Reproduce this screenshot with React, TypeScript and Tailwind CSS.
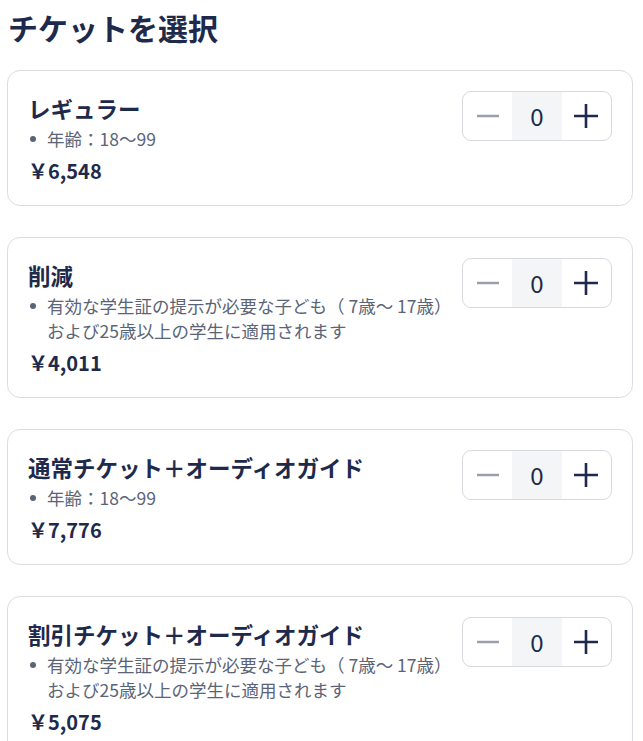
import React from 'react';

interface Ticket {
  name: string;
  lines: string[];
  price: string;
}

const tickets: Ticket[] = [
  { name: 'レギュラー', lines: ['年齢：18〜99'], price: '￥6,548' },
  {
    name: '削減',
    lines: ['有効な学生証の提示が必要な子ども（ 7歳〜 17歳）', 'および25歳以上の学生に適用されます'],
    price: '￥4,011',
  },
  { name: '通常チケット＋オーディオガイド', lines: ['年齢：18〜99'], price: '￥7,776' },
  {
    name: '割引チケット＋オーディオガイド',
    lines: ['有効な学生証の提示が必要な子ども（ 7歳〜 17歳）', 'および25歳以上の学生に適用されます'],
    price: '￥5,075',
  },
];

const Stepper: React.FC = () => (
  <div className="flex h-[50px] w-[150px] shrink-0 overflow-hidden rounded-[9px] border border-[#d6d9de]">
    <button className="flex w-[50px] items-center justify-center" aria-label="減らす">
      <svg width="22" height="22" viewBox="0 0 22 22">
        <line x1="0.5" y1="11" x2="21.5" y2="11" stroke="#9aa1ad" strokeWidth="2.6" strokeLinecap="round" />
      </svg>
    </button>
    <div className="flex w-[50px] items-center justify-center bg-[#f4f5f7] text-[24px] text-[#1e2a4b]">0</div>
    <button className="flex w-[50px] items-center justify-center" aria-label="増やす">
      <svg width="24" height="24" viewBox="0 0 24 24">
        <line x1="0.5" y1="12" x2="23.5" y2="12" stroke="#1e2a4b" strokeWidth="2.6" strokeLinecap="round" />
        <line x1="12" y1="0.5" x2="12" y2="23.5" stroke="#1e2a4b" strokeWidth="2.6" strokeLinecap="round" />
      </svg>
    </button>
  </div>
);

const TicketCard: React.FC<{ ticket: Ticket }> = ({ ticket }) => (
  <div className="flex items-start justify-between rounded-[13px] border border-[#dadde2] bg-white p-5">
    <div className="flex flex-col">
      <h2 className="text-[22.5px] font-bold leading-[35px] text-[#1e2a4b]">{ticket.name}</h2>
      <div className="flex pl-[2px]">
        <span className="mt-[10px] h-[6px] w-[6px] shrink-0 rounded-full bg-[#5b6477]" />
        <div className="ml-[11px] text-[17.5px] leading-[25px] text-[#5b6477]">
          {ticket.lines.map((l) => (
            <div key={l}>{l}</div>
          ))}
        </div>
      </div>
      <div className="mt-[6px] text-[20px] font-bold leading-[28px] text-[#1e2a4b]">{ticket.price}</div>
    </div>
    <Stepper />
  </div>
);

const App: React.FC = () => {
  return (
    <div
      className="min-h-[741px] w-[643px] bg-white"
      style={{ fontFamily: '"Noto Sans CJK JP", "Noto Sans", sans-serif' }}
    >
      <h1 className="pl-[8px] text-[30px] font-bold leading-[54px] text-[#1e2a4b]">チケットを選択</h1>
      <div className="ml-[7px] mt-[16px] flex w-[626px] flex-col gap-[31px]">
        {tickets.map((t) => (
          <TicketCard key={t.name} ticket={t} />
        ))}
      </div>
    </div>
  );
};

export default App;
